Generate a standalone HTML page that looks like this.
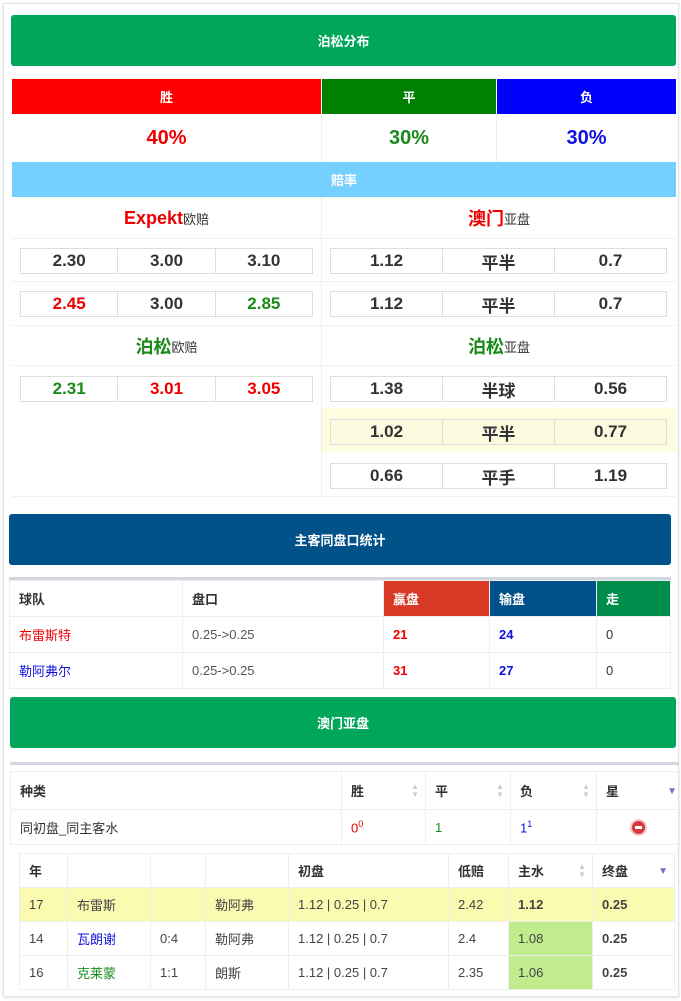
<!DOCTYPE html>
<html><head><meta charset="utf-8"><style>
*{margin:0;padding:0;box-sizing:border-box}
body{width:681px;height:1001px;background:#fff;font-family:"Liberation Sans","Noto Sans CJK SC",sans-serif;position:relative;overflow:hidden;color:#333}
.a{position:absolute}
.card{left:3px;top:3px;width:676px;height:994px;border:1px solid #e3e3e3;box-shadow:0 1px 3px rgba(0,0,0,.1)}
.bar{display:flex;align-items:center;justify-content:center;color:#fff;font-weight:bold;font-size:13px}
.c{display:flex;align-items:center;justify-content:center}
.box{display:flex;border:1px solid #ddd;height:26px;font-size:17px;font-weight:bold;color:#333}
.box div{flex:1;display:flex;align-items:center;justify-content:center;border-left:1px solid #ddd}
.box div:first-child{border-left:none}
.r{color:#e00}.g{color:#1a8a1a}.b{color:#1010e0}
table{border-collapse:collapse;position:absolute;font-size:13px}
td{border:1px solid #eee;padding:0 9px;vertical-align:middle}
.sort{position:absolute;right:6px;top:50%;margin-top:-8px;color:#ccc;font-size:8px;line-height:8px}
</style></head><body>
<div class="a card"></div>
<div class="a bar" style="left:11px;top:15px;width:665px;height:51px;background:#00a65a;border-radius:3px">泊松分布</div>
<div class="a bar" style="left:12px;top:79px;width:309px;height:35px;background:#f00">胜</div>
<div class="a bar" style="left:322px;top:79px;width:174px;height:35px;background:#008000">平</div>
<div class="a bar" style="left:497px;top:79px;width:179px;height:35px;background:#00f">负</div>
<div class="a c r" style="left:12px;top:115px;width:309px;height:47px;font-size:20px;font-weight:bold">40%</div>
<div class="a c g" style="left:322px;top:115px;width:174px;height:47px;font-size:20px;font-weight:bold">30%</div>
<div class="a c b" style="left:497px;top:115px;width:179px;height:47px;font-size:20px;font-weight:bold">30%</div>
<div class="a" style="left:321px;top:115px;width:1px;height:47px;background:#eee"></div>
<div class="a" style="left:496px;top:115px;width:1px;height:47px;background:#eee"></div>
<div class="a bar" style="left:12px;top:162px;width:664px;height:35px;background:#75cfff">赔率</div>
<div class="a" style="left:321px;top:197px;width:1px;height:300px;background:#eee"></div>
<div class="a" style="left:12px;top:238px;width:664px;height:1px;background:#f0f0f0"></div>
<div class="a" style="left:12px;top:281px;width:664px;height:1px;background:#f0f0f0"></div>
<div class="a" style="left:12px;top:325px;width:664px;height:1px;background:#f0f0f0"></div>
<div class="a" style="left:12px;top:365px;width:664px;height:1px;background:#f0f0f0"></div>
<div class="a" style="left:12px;top:496px;width:664px;height:1px;background:#f0f0f0"></div>
<div class="a c" style="left:12px;top:198px;width:309px;height:40px;font-size:13px"><b class="r" style="font-size:18px">Expekt</b>欧赔</div>
<div class="a c" style="left:322px;top:198px;width:354px;height:40px;font-size:13px"><b class="r" style="font-size:18px">澳门</b>亚盘</div>
<div class="a box" style="left:20px;top:248px;width:293px"><div>2.30</div><div>3.00</div><div>3.10</div></div>
<div class="a box" style="left:330px;top:248px;width:337px"><div>1.12</div><div>平半</div><div>0.7</div></div>
<div class="a box" style="left:20px;top:291px;width:293px"><div class="r">2.45</div><div>3.00</div><div class="g">2.85</div></div>
<div class="a box" style="left:330px;top:291px;width:337px"><div>1.12</div><div>平半</div><div>0.7</div></div>
<div class="a c" style="left:12px;top:326px;width:309px;height:40px;font-size:13px"><b class="g" style="font-size:18px">泊松</b>欧赔</div>
<div class="a c" style="left:322px;top:326px;width:354px;height:40px;font-size:13px"><b class="g" style="font-size:18px">泊松</b>亚盘</div>
<div class="a box" style="left:20px;top:376px;width:293px"><div class="g">2.31</div><div class="r">3.01</div><div class="r">3.05</div></div>
<div class="a box" style="left:330px;top:376px;width:337px"><div>1.38</div><div>半球</div><div>0.56</div></div>
<div class="a" style="left:322px;top:408px;width:354px;height:44px;background:#fdfde0"></div>
<div class="a box" style="left:330px;top:419px;width:337px;background:#fbfbe0"><div>1.02</div><div>平半</div><div>0.77</div></div>
<div class="a box" style="left:330px;top:463px;width:337px"><div>0.66</div><div>平手</div><div>1.19</div></div>
<div class="a bar" style="left:9px;top:514px;width:662px;height:51px;background:#02528a;border-radius:3px">主客同盘口统计</div>
<div class="a" style="left:9px;top:577px;width:662px;height:3px;background:#d2d6de"></div>
<table style="left:9px;top:580px;width:662px">
<tr style="height:36px;font-weight:bold"><td style="width:173px">球队</td><td style="width:201px">盘口</td><td style="width:106px;background:#d73925;color:#fff">赢盘</td><td style="width:107px;background:#01508a;color:#fff">输盘</td><td style="background:#008d4c;color:#fff">走</td></tr>
<tr style="height:36px"><td class="r">布雷斯特</td><td style="color:#555">0.25-&gt;0.25</td><td class="r"><b>21</b></td><td class="b"><b>24</b></td><td>0</td></tr>
<tr style="height:36px"><td class="b">勒阿弗尔</td><td style="color:#555">0.25-&gt;0.25</td><td class="r"><b>31</b></td><td class="b"><b>27</b></td><td>0</td></tr>
</table>
<div class="a bar" style="left:10px;top:697px;width:666px;height:51px;background:#00a65a;border-radius:3px">澳门亚盘</div>
<div class="a" style="left:10px;top:762px;width:669px;height:3px;background:#d2d6de"></div>
<table style="left:10px;top:771px;width:670px">
<tr style="height:38px;font-weight:bold"><td style="width:331px">种类</td><td style="width:84px;position:relative">胜<span class="sort">▲<br>▼</span></td><td style="width:85px;position:relative">平<span class="sort">▲<br>▼</span></td><td style="width:86px;position:relative">负<span class="sort">▲<br>▼</span></td><td style="position:relative">星<span style="position:absolute;right:2px;top:14px;color:#7070d0;font-size:10px">▼</span></td></tr>
<tr style="height:35px"><td>同初盘_同主客水</td><td class="r">0<sup style="font-size:9px">0</sup></td><td class="g">1</td><td class="b">1<sup style="font-size:9px">1</sup></td><td><span style="display:block;margin:0 auto;width:17px;height:17px;border-radius:50%;background:#d9373e;border:2px solid #f3c7c9;position:relative"><span style="position:absolute;left:3px;top:5px;width:7px;height:3px;background:#fff"></span></span></td></tr>
</table>
<table style="left:19px;top:853px;width:656px">
<tr style="height:34px;font-weight:bold"><td style="width:48px">年</td><td style="width:83px"></td><td style="width:55px"></td><td style="width:83px"></td><td style="width:160px">初盘</td><td style="width:60px">低赔</td><td style="width:84px;position:relative">主水<span class="sort">▲<br>▼</span></td><td style="position:relative">终盘<span style="position:absolute;right:6px;top:12px;color:#7070d0;font-size:10px">▼</span></td></tr>
<tr style="height:34px;background:#fafab0;color:#444"><td>17</td><td>布雷斯</td><td></td><td>勒阿弗</td><td>1.12 | 0.25 | 0.7</td><td>2.42</td><td><b>1.12</b></td><td><b>0.25</b></td></tr>
<tr style="height:34px;color:#444"><td>14</td><td class="b">瓦朗谢</td><td>0:4</td><td>勒阿弗</td><td>1.12 | 0.25 | 0.7</td><td>2.4</td><td style="background:#c0ec8e">1.08</td><td><b>0.25</b></td></tr>
<tr style="height:34px;color:#444"><td>16</td><td class="g">克莱蒙</td><td>1:1</td><td>朗斯</td><td>1.12 | 0.25 | 0.7</td><td>2.35</td><td style="background:#c0ec8e">1.06</td><td><b>0.25</b></td></tr>
</table>
</body></html>
